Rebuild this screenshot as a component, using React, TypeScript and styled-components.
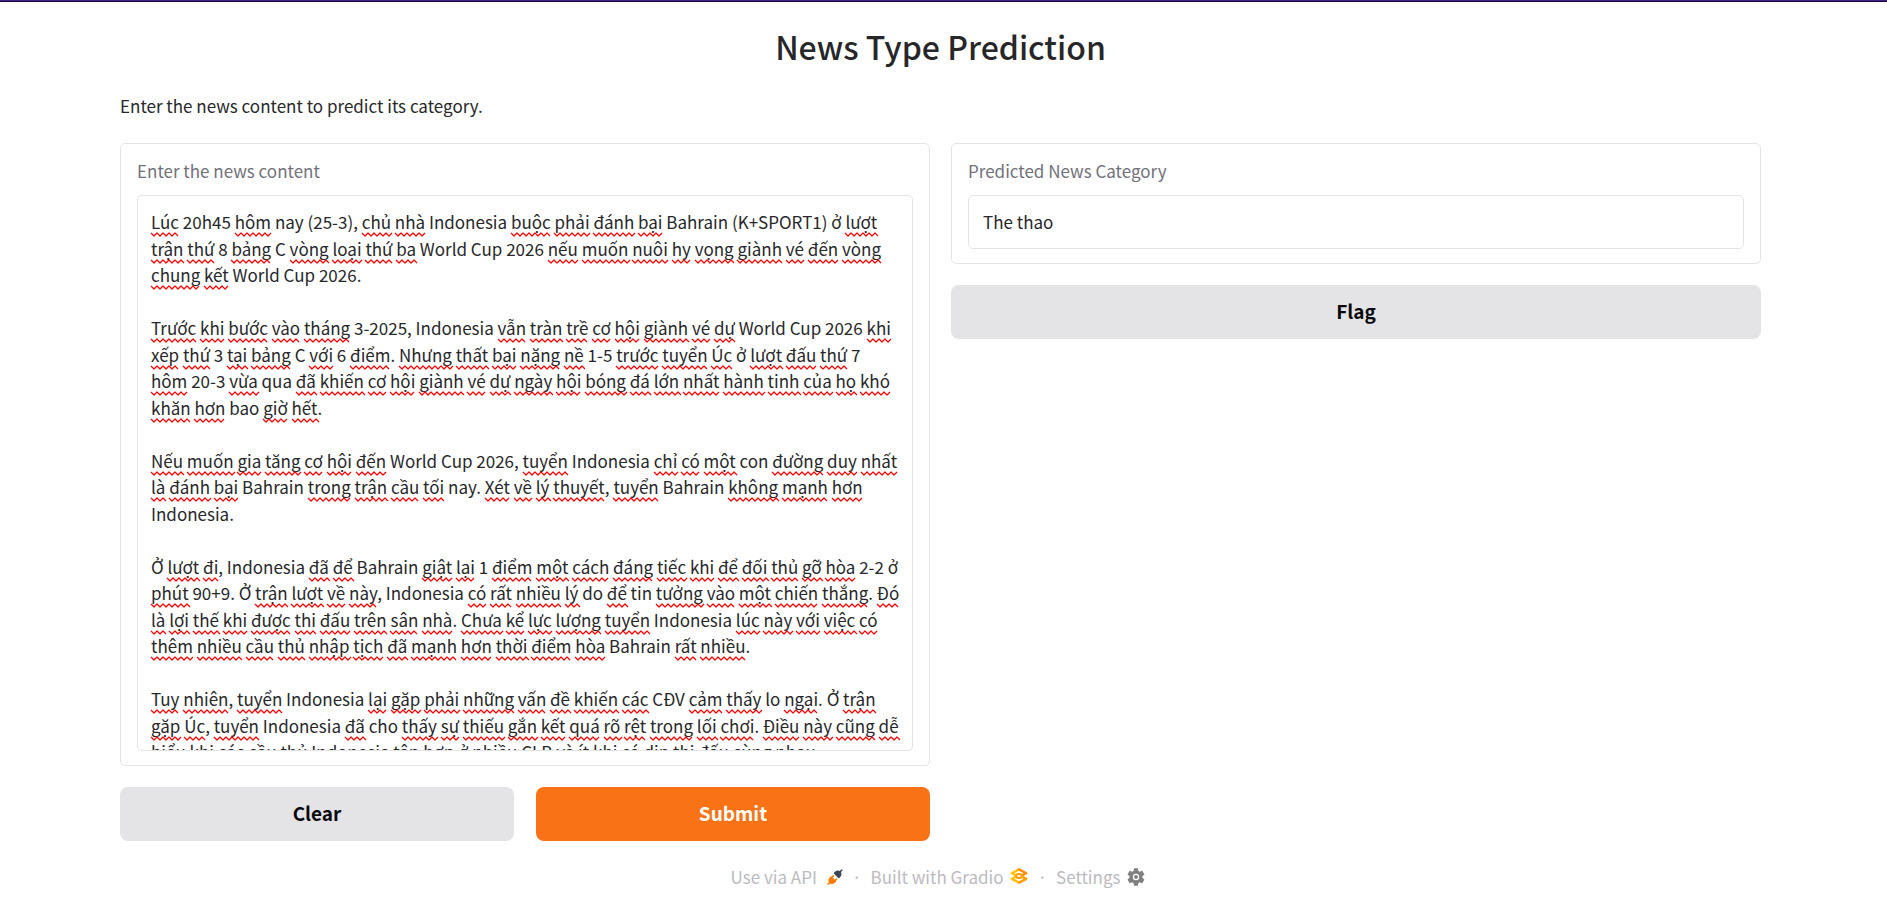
import React, { useLayoutEffect, useRef, useState } from 'react';
import styled, { createGlobalStyle, css } from 'styled-components';

const GlobalStyle = createGlobalStyle`
  * { box-sizing: border-box; }
  body {
    margin: 0;
    background: #ffffff;
    color: #27272a;
    font-family: "Noto Sans CJK JP", "Noto Sans", sans-serif;
    font-size: 17px;
    line-height: 26px;
  }
`;

const ARTICLE = [
  'Lúc 20h45 hôm nay (25-3), chủ nhà Indonesia buộc phải đánh bại Bahrain (K+SPORT1) ở lượt trận thứ 8 bảng C vòng loại thứ ba World Cup 2026 nếu muốn nuôi hy vọng giành vé đến vòng chung kết World Cup 2026.',
  'Trước khi bước vào tháng 3-2025, Indonesia vẫn tràn trề cơ hội giành vé dự World Cup 2026 khi xếp thứ 3 tại bảng C với 6 điểm. Nhưng thất bại nặng nề 1-5 trước tuyển Úc ở lượt đấu thứ 7 hôm 20-3 vừa qua đã khiến cơ hội giành vé dự ngày hội bóng đá lớn nhất hành tinh của họ khó khăn hơn bao giờ hết.',
  'Nếu muốn gia tăng cơ hội đến World Cup 2026, tuyển Indonesia chỉ có một con đường duy nhất là đánh bại Bahrain trong trận cầu tối nay. Xét về lý thuyết, tuyển Bahrain không mạnh hơn Indonesia.',
  'Ở lượt đi, Indonesia đã để Bahrain giật lại 1 điểm một cách đáng tiếc khi để đối thủ gỡ hòa 2-2 ở phút 90+9. Ở trận lượt về này, Indonesia có rất nhiều lý do để tin tưởng vào một chiến thắng. Đó là lợi thế khi được thi đấu trên sân nhà. Chưa kể lực lượng tuyển Indonesia lúc này với việc có thêm nhiều cầu thủ nhập tịch đã mạnh hơn thời điểm hòa Bahrain rất nhiều.',
  'Tuy nhiên, tuyển Indonesia lại gặp phải những vấn đề khiến các CĐV cảm thấy lo ngại. Ở trận gặp Úc, tuyển Indonesia đã cho thấy sự thiếu gắn kết quá rõ rệt trong lối chơi. Điều này cũng dễ hiểu khi các cầu thủ Indonesia tập hợp ở nhiều CLB và ít khi có dịp thi đấu cùng nhau.',
].join('\n\n');

const KNOWN_WORDS = new Set([
  'nay', 'Indonesia', 'Bahrain', 'K', 'SPORT', 'ở', 'Ở', 'C', 'World', 'Cup', 'h',
  'qua', 'bao', 'con', 'do', 'tin', 'CĐV', 'CLB', 'lo', 'cho',
]);

const Page = styled.div`
  border-top: 1px solid #42208a;
  box-shadow: inset 0 1px 0 #1c0a3e;
  padding: 20px 126px 0 120px;
`;

const Title = styled.h1`
  margin: 0;
  font-size: 32px;
  line-height: 50px;
  font-weight: 500;
  text-align: center;
`;

const Description = styled.p`
  margin: 22px 0 24px;
`;

const Columns = styled.main`
  display: grid;
  grid-template-columns: 1fr 1fr;
  align-items: start;
  gap: 21px;
`;

const Column = styled.div`
  display: flex;
  flex-direction: column;
  gap: 21px;
`;

const Card = styled.section`
  border: 1px solid #e4e4e7;
  border-radius: 5px;
  padding: 14px 16px;
`;

const Label = styled.label`
  display: block;
  margin-bottom: 11px;
  color: #71717a;
`;

const Editor = styled.div`
  position: relative;
  display: flex;
`;

const NewsText = styled.textarea`
  flex: 1;
  min-width: 0;
  height: 556px;
  margin: 0;
  padding: 13px 12px 13px 13px;
  border: 1px solid #e4e4e7;
  border-radius: 5px;
  outline: none;
  resize: none;
  background: transparent;
  color: #27272a;
  font: inherit;
  line-height: 1.56;
  white-space: pre-wrap;
  overflow-wrap: break-word;
  overflow-y: auto;
  scrollbar-width: none;
`;

const Squiggles = styled.svg`
  position: absolute;
  inset: 1px;
  width: calc(100% - 2px);
  height: calc(100% - 2px);
  pointer-events: none;
`;

const Result = styled.input`
  display: block;
  width: 100%;
  height: 54px;
  padding: 0 14px 2px;
  border: 1px solid #e4e4e7;
  border-radius: 5px;
  outline: none;
  background: #ffffff;
  color: #27272a;
  font: inherit;
`;

const Actions = styled.div`
  display: flex;
  gap: 22px;
`;

const Button = styled.button<{ $primary?: boolean }>`
  flex: 1;
  min-height: 54px;
  border: 0;
  border-radius: 8px;
  padding: 0 16px 2px;
  background: ${(p) => (p.$primary ? '#f97316' : '#e4e4e7')};
  color: ${(p) => (p.$primary ? '#ffffff' : '#09090b')};
  font: inherit;
  font-size: 19px;
  font-weight: 700;
  cursor: pointer;
`;

const Footer = styled.footer`
  display: flex;
  justify-content: center;
  align-items: center;
  gap: 9px;
  margin-top: 23px;
  padding-right: 5px;
  color: #bbbbc0;
`;

const footerItem = css`
  display: flex;
  align-items: center;
  gap: 7px;
  border: 0;
  padding: 0;
  background: none;
  color: inherit;
  font: inherit;
  text-decoration: none;
  cursor: pointer;
`;

const FooterButton = styled.button`
  ${footerItem}
`;

const FooterLink = styled.a`
  ${footerItem}
`;

function PlugIcon() {
  return (
    <svg width="19" height="16" viewBox="-5 0 33 28" aria-hidden="true">
      <path
        fill="#3c4555"
        d="M26.94 2.94c.52-.52.52-1.36 0-1.88s-1.36-.52-1.88 0l-2.49 2.48c-1.45-.95-3.03-1.11-4.4-.9-1.62.25-3.06 1.03-3.78 1.75l-2 2c-.52.52-.52 1.37 0 1.89l7.33 7.33c.52.52 1.37.52 1.89 0l2-2c.72-.72 1.5-2.16 1.75-3.79.21-1.36.05-2.94-.9-4.39z"
      />
      <path
        fill="#ff7c00"
        d="M12.28 12.94c.52-.52.52-1.36 0-1.88s-1.37-.52-1.89 0l-2.11 2.11c-.52-.52-1.37-.52-1.89 0l-2 2c-.72.72-1.5 2.16-1.75 3.79-.21 1.36-.05 2.94.9 4.39l-2.48 2.49c-.52.52-.52 1.36 0 1.88s1.36.52 1.88 0l2.49-2.48c1.45.95 3.03 1.11 4.39.9 1.63-.25 3.07-1.03 3.79-1.75l2-2c.52-.52.52-1.37 0-1.89l2.11-2.11c.52-.52.52-1.37 0-1.89s-1.36-.52-1.88 0l-2.12 2.12-3.56-3.56z"
      />
    </svg>
  );
}

function GradioIcon() {
  return (
    <svg width="18" height="18" viewBox="0 0 18 18" fill="none" aria-hidden="true">
      <g strokeWidth="2.4" strokeLinejoin="round" strokeLinecap="round">
        <path stroke="#ffc107" d="M4.6 9.4 1.8 10.9 9 14.6" />
        <path stroke="#ff9d00" d="M9 14.6 16.2 10.9 13.4 9.4" />
        <path stroke="#ffc107" d="M9 1.4 1.8 5.2 5.8 7.3" />
        <path stroke="#ff8c00" d="M9 1.4 16.2 5.2 12.2 7.3" />
        <ellipse stroke="#ff9d00" strokeWidth="2" cx="9" cy="8" rx="3" ry="2.1" />
      </g>
    </svg>
  );
}

function GearIcon() {
  return (
    <svg width="18" height="18" viewBox="1 1.2 21.6 21.6" aria-hidden="true">
      <path
        fill="#808080"
        d="M19.4 13c.04-.32.06-.66.06-1s-.02-.68-.06-1l2.2-1.7c.2-.15.25-.43.12-.66l-2.2-3.8c-.13-.23-.4-.32-.64-.23l-2.6 1.05a7.6 7.6 0 0 0-1.75-1.02l-.4-2.76A.52.52 0 0 0 13.6 1.4H9.9c-.26 0-.48.18-.52.45L9 4.62c-.63.26-1.22.6-1.76 1.02L4.64 4.6c-.24-.1-.5 0-.64.23L1.8 8.64c-.13.22-.08.5.12.66L4.1 11c-.04.32-.06.66-.06 1s.02.68.06 1l-2.2 1.7a.5.5 0 0 0-.12.66l2.2 3.8c.14.24.4.32.64.24l2.6-1.05c.54.42 1.13.76 1.76 1.02l.4 2.78c.04.26.26.45.52.45h3.7c.26 0 .48-.19.52-.45l.4-2.78a7.6 7.6 0 0 0 1.75-1.02l2.6 1.05c.25.1.51 0 .65-.23l2.2-3.81a.5.5 0 0 0-.13-.66z"
      />
      <circle cx="11.8" cy="12" r="3.1" fill="none" stroke="#ffffff" strokeWidth="1.5" />
    </svg>
  );
}

type Mark = { x: number; y: number; width: number };

/* Finds where each unknown word lies, by laying the text out in a
   short-lived copy of the text box. */
function measureMarks(box: HTMLTextAreaElement): Mark[] {
  const style = getComputedStyle(box);
  const mirror = document.createElement('div');
  mirror.style.position = 'absolute';
  mirror.style.top = '0';
  mirror.style.left = '0';
  mirror.style.visibility = 'hidden';
  mirror.style.boxSizing = 'border-box';
  mirror.style.width = `${box.clientWidth}px`;
  mirror.style.padding = style.padding;
  mirror.style.font = style.font;
  mirror.style.lineHeight = style.lineHeight;
  mirror.style.whiteSpace = 'pre-wrap';
  mirror.style.overflowWrap = 'break-word';
  const node = document.createTextNode(box.value);
  mirror.appendChild(node);
  document.body.appendChild(mirror);

  const origin = mirror.getBoundingClientRect();
  const range = document.createRange();
  const marks: Mark[] = [];
  for (const match of box.value.matchAll(/\p{L}+/gu)) {
    if (KNOWN_WORDS.has(match[0])) continue;
    range.setStart(node, match.index);
    range.setEnd(node, match.index + match[0].length);
    const rect = range.getBoundingClientRect();
    marks.push({
      x: Math.round(rect.left - origin.left),
      y: Math.round(rect.bottom - origin.top) + 2,
      width: Math.round(rect.width),
    });
  }
  mirror.remove();
  return marks;
}

function squigglePath({ x, y, width }: Mark) {
  let d = `M${x} ${y - 3}`;
  for (let dx = 3, down = true; dx <= width + 1; dx += 3, down = !down) {
    d += `L${x + dx} ${down ? y : y - 3}`;
  }
  return d;
}

export default function App() {
  const [text, setText] = useState(ARTICLE);
  const [result, setResult] = useState('The thao');
  const [marks, setMarks] = useState<Mark[]>([]);
  const [scroll, setScroll] = useState(0);
  const box = useRef<HTMLTextAreaElement>(null);

  useLayoutEffect(() => {
    const element = box.current;
    if (!element) return undefined;
    const update = () => setMarks(measureMarks(element));
    update();
    const observer = new ResizeObserver(update);
    observer.observe(element);
    return () => observer.disconnect();
  }, [text]);

  const clear = () => {
    setText('');
    setResult('');
  };

  return (
    <Page>
      <GlobalStyle />
      <Title>News Type Prediction</Title>
      <Description>Enter the news content to predict its category.</Description>
      <Columns>
        <Column>
          <Card>
            <Label htmlFor="news">Enter the news content</Label>
            <Editor>
              <NewsText
                id="news"
                ref={box}
                spellCheck={false}
                value={text}
                onChange={(e) => setText(e.target.value)}
                onScroll={(e) => setScroll(e.currentTarget.scrollTop)}
              />
              <Squiggles aria-hidden="true">
                <path
                  d={marks.map(squigglePath).join('')}
                  transform={`translate(0 ${-scroll})`}
                  fill="none"
                  stroke="#ff0000"
                  strokeWidth="1.2"
                  strokeLinejoin="round"
                />
              </Squiggles>
            </Editor>
          </Card>
          <Actions>
            <Button type="button" onClick={clear}>Clear</Button>
            <Button type="button" $primary>Submit</Button>
          </Actions>
        </Column>
        <Column>
          <Card>
            <Label htmlFor="category">Predicted News Category</Label>
            <Result id="category" value={result} readOnly />
          </Card>
          <Button type="button">Flag</Button>
        </Column>
      </Columns>
      <Footer>
        <FooterButton type="button">Use via API <PlugIcon /></FooterButton>
        <span>·</span>
        <FooterLink href="#gradio">Built with Gradio <GradioIcon /></FooterLink>
        <span>·</span>
        <FooterButton type="button">Settings <GearIcon /></FooterButton>
      </Footer>
    </Page>
  );
}
